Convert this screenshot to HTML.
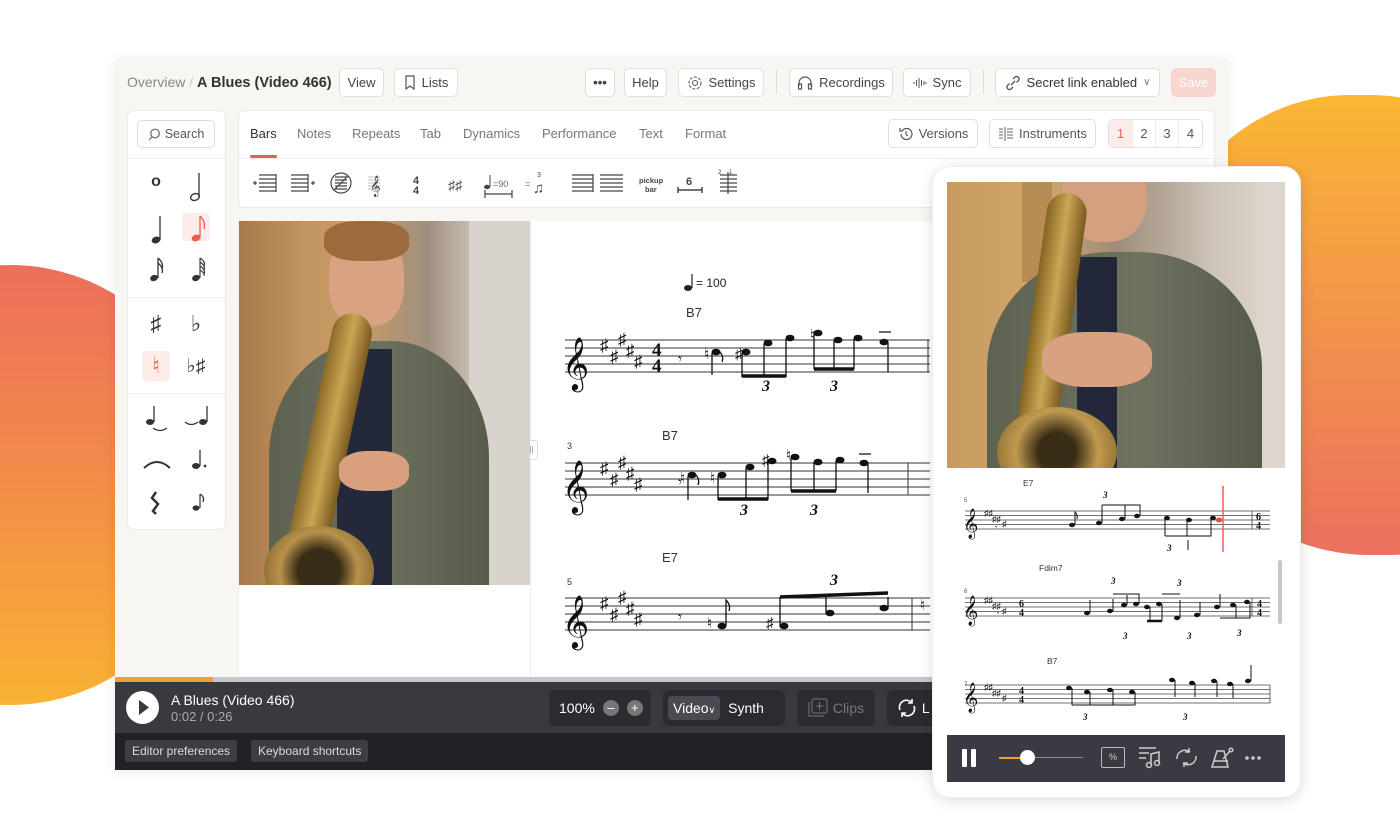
<!DOCTYPE html>
<html><head><meta charset="utf-8"><style>
*{box-sizing:border-box;margin:0;padding:0}
body{width:1400px;height:826px;overflow:hidden;background:#fff;font-family:"Liberation Sans","DejaVu Sans",sans-serif;position:relative;color:#333}
.abs{position:absolute}
.btn{position:absolute;top:68px;height:29px;background:#fff;border:1px solid #e2e0dc;border-radius:5px;font-size:13px;color:#444;display:flex;align-items:center;justify-content:center;gap:6px}
.tab{position:absolute;top:126px;font-size:13px;color:#777}
.pal{position:absolute;font-size:22px;color:#333;width:30px;text-align:center}
.dk{position:absolute;background:#2b2b31;border-radius:5px;color:#fff;font-size:14px;display:flex;align-items:center}
.fb{position:absolute;top:740px;height:22px;background:#3d3d44;border-radius:3px;color:#ddd;font-size:12px;padding:0 7px;display:flex;align-items:center}
</style></head><body>
<div class="abs" style="left:-200px;top:265px;width:420px;height:440px;border-radius:50%;background:linear-gradient(180deg,#ec6f5c 0%,#f28a4a 45%,#f9b233 100%)"></div>
<div class="abs" style="left:1150px;top:95px;width:420px;height:460px;border-radius:50% 50% 45% 55%;background:linear-gradient(180deg,#fbb733 0%,#f49a48 40%,#ec705e 100%)"></div>

<div class="abs" style="left:115px;top:58px;width:1113px;height:712px;background:#f7f6f3;box-shadow:0 2px 14px rgba(0,0,0,.08)"></div>
<div class="abs" style="left:127px;top:74px;font-size:14px;color:#888">Overview <span style="color:#ccc">/</span> <span style="color:#333;font-weight:bold;font-size:14.5px">A Blues (Video 466)</span></div>
<div class="btn" style="left:339px;width:45px">View</div>
<div class="btn" style="left:394px;width:64px"><svg width="12" height="15"><path d="M2 1h8v13l-4-3-4 3z" fill="none" stroke="#555" stroke-width="1.2"/></svg>Lists</div>
<div class="btn" style="left:585px;width:30px;font-weight:bold">•••</div>
<div class="btn" style="left:624px;width:43px">Help</div>
<div class="btn" style="left:678px;width:86px"><svg width="16" height="16"><circle cx="8" cy="8" r="2.5" fill="none" stroke="#555"/><circle cx="8" cy="8" r="6" fill="none" stroke="#555" stroke-dasharray="3 1.5"/></svg>Settings</div>
<div class="abs" style="left:776px;top:70px;width:1px;height:24px;background:#ddd"></div>
<div class="btn" style="left:789px;width:104px"><svg width="16" height="15"><path d="M2 11V8a6 6 0 0 1 12 0v3M1.5 9h3v5h-3zM11.5 9h3v5h-3z" fill="none" stroke="#555" stroke-width="1.2"/></svg>Recordings</div>
<div class="btn" style="left:903px;width:68px"><svg width="14" height="14"><path d="M1 6v2M3.5 4v6M6 2v10M8.5 4v6M11 5v4M13 6v2" stroke="#555"/></svg>Sync</div>
<div class="abs" style="left:983px;top:70px;width:1px;height:24px;background:#ddd"></div>
<div class="btn" style="left:995px;width:165px;color:#333"><svg width="16" height="16"><path d="M6 10l4-4M4.5 8.5l-2 2a2.5 2.5 0 0 0 3.5 3.5l2-2M11.5 7.5l2-2a2.5 2.5 0 0 0-3.5-3.5l-2 2" fill="none" stroke="#555" stroke-width="1.3"/></svg><span style="color:#333">Secret link enabled</span> <span style="font-size:10px;color:#777">∨</span></div>
<div class="btn" style="left:1171px;width:45px;background:#f8d5cf;border-color:#f8d5cf;color:#fff">Save</div>

<div class="abs" style="left:127px;top:110px;width:99px;height:420px;background:#fff;border:1px solid #ebe9e5;border-radius:6px"></div>
<div class="abs" style="left:137px;top:120px;width:78px;height:28px;border:1px solid #ddd;border-radius:5px;font-size:12.5px;color:#555;display:flex;align-items:center;justify-content:center;gap:5px"><svg width="12" height="13"><circle cx="7" cy="5.5" r="4.3" fill="none" stroke="#666" stroke-width="1.2"/><path d="M4 9l-3 3" stroke="#666" stroke-width="1.2"/></svg>Search</div>
<div class="abs" style="left:128px;top:158px;width:97px;height:1px;background:#eee"></div>
<div class="abs" style="left:128px;top:297px;width:97px;height:1px;background:#eee"></div>
<div class="abs" style="left:128px;top:393px;width:97px;height:1px;background:#eee"></div>
<div class="abs" style="left:182px;top:213px;width:28px;height:28px;background:#fdecea;border-radius:4px"></div>
<div class="abs" style="left:142px;top:351px;width:28px;height:30px;background:#fdecea;border-radius:4px"></div>
<div class="pal" style="left:141px;top:173px;font-size:16px;font-weight:bold">o</div>
<svg class="abs" style="left:140px;top:166px" width="80" height="125">
<path d="M59 7v24" stroke="#333" stroke-width="1.3"/><ellipse cx="55" cy="31" rx="4.5" ry="3.3" fill="none" stroke="#333" stroke-width="1.4" transform="rotate(-20 55 31)"/>
<path d="M20 50v24" stroke="#333" stroke-width="1.3"/><ellipse cx="16" cy="74" rx="4.5" ry="3.3" fill="#333" transform="rotate(-20 16 74)"/>
<path d="M60 50v22M60 50q6 6 4 13" stroke="#e8604a" stroke-width="1.3" fill="none"/><ellipse cx="56" cy="72" rx="4.5" ry="3.3" fill="#e8604a" transform="rotate(-20 56 72)"/>
<path d="M18 92v20M18 92q6 5 4 11M18 97q6 5 4 10" stroke="#333" stroke-width="1.3" fill="none"/><ellipse cx="14" cy="112" rx="4" ry="3" fill="#333" transform="rotate(-20 14 112)"/>
<path d="M60 92v20M60 92q6 4 4 8M60 96q6 4 4 8M60 100q6 4 4 8M60 104q5 3 4 6" stroke="#333" stroke-width="1.1" fill="none"/><ellipse cx="56" cy="112" rx="4" ry="3" fill="#333" transform="rotate(-20 56 112)"/>
</svg>
<div class="pal" style="left:141px;top:311px;font-size:22px">♯</div>
<div class="pal" style="left:181px;top:311px;font-size:22px">♭</div>
<div class="pal" style="left:141px;top:353px;font-size:22px;color:#e8604a">♮</div>
<div class="pal" style="left:181px;top:355px;font-size:19px">♭♯</div>
<svg class="abs" style="left:140px;top:400px" width="80" height="125">
<path d="M14 6v16" stroke="#333" stroke-width="1.3"/><ellipse cx="10" cy="22" rx="4" ry="3" fill="#333"/><path d="M13 28q7 5 14 0" stroke="#333" fill="none" stroke-width="1.3"/>
<path d="M67 6v16" stroke="#333" stroke-width="1.3"/><ellipse cx="63" cy="22" rx="4" ry="3" fill="#333"/><path d="M45 22q6 5 13 0" stroke="#333" fill="none" stroke-width="1.3"/>
<path d="M4 68q13-12 26 0" stroke="#333" fill="none" stroke-width="2"/>
<path d="M60 50v16" stroke="#333" stroke-width="1.3"/><ellipse cx="56" cy="66" rx="4" ry="3" fill="#333"/><circle cx="65" cy="66" r="1.4" fill="#333"/>
<path d="M16 92l-4 6 6 6-5 7 3 3" stroke="#333" stroke-width="2.5" fill="none"/>
<path d="M60 94v14M60 94q5 3 3 8" stroke="#333" fill="none" stroke-width="1.2"/><ellipse cx="56" cy="108" rx="3.5" ry="2.6" fill="#333"/>
</svg>

<div class="abs" style="left:238px;top:110px;width:977px;height:98px;background:#fff;border:1px solid #ebe9e5;border-radius:6px"></div>
<div class="abs" style="left:239px;top:158px;width:975px;height:1px;background:#eee"></div>
<div class="tab" style="left:250px;color:#333">Bars</div>
<div class="abs" style="left:250px;top:155px;width:27px;height:3px;background:#e8604a;border-radius:2px"></div>
<div class="tab" style="left:297px">Notes</div>
<div class="tab" style="left:352px">Repeats</div>
<div class="tab" style="left:420px">Tab</div>
<div class="tab" style="left:463px">Dynamics</div>
<div class="tab" style="left:542px">Performance</div>
<div class="tab" style="left:639px">Text</div>
<div class="tab" style="left:685px">Format</div>
<div class="abs" style="left:888px;top:119px;width:90px;height:29px;border:1px solid #e2e0dc;border-radius:5px;font-size:13px;color:#555;display:flex;align-items:center;justify-content:center;gap:5px"><svg width="16" height="16"><path d="M3 8a5.5 5.5 0 1 0 1.5-3.8M2 2v3h3M8 5v3.5l2 1.5" fill="none" stroke="#555" stroke-width="1.2"/></svg>Versions</div>
<div class="abs" style="left:989px;top:119px;width:107px;height:29px;border:1px solid #e2e0dc;border-radius:5px;font-size:13px;color:#555;display:flex;align-items:center;justify-content:center;gap:5px"><svg width="16" height="16"><path d="M1 3h4M1 6h4M1 9h4M1 12h4M9 3h6M9 6h6M9 9h6M9 12h6" stroke="#666"/><path d="M7 1v14" stroke="#666"/></svg>Instruments</div>
<div class="abs" style="left:1108px;top:119px;width:95px;height:29px;border:1px solid #e2e0dc;border-radius:5px;display:flex;font-size:13px;color:#555;overflow:hidden">
<div style="width:24px;background:#fdecea;color:#e8604a;display:flex;align-items:center;justify-content:center;border-right:1px solid #eee">1</div>
<div style="width:23px;display:flex;align-items:center;justify-content:center;border-right:1px solid #eee">2</div>
<div style="width:23px;display:flex;align-items:center;justify-content:center;border-right:1px solid #eee">3</div>
<div style="width:23px;display:flex;align-items:center;justify-content:center">4</div></div>
<svg class="abs" style="left:250px;top:168px" width="500" height="30">
<g stroke="#444" stroke-width="1.2" fill="none">
<path d="M9 7h17M9 11h17M9 15h17M9 19h17M9 23h17M26 6v18M3 15h4M5 13v4"/>
<path d="M41 7h17M41 11h17M41 15h17M41 19h17M41 23h17M58 6v18M61 15h4M63 13v4"/>
<circle cx="91" cy="15" r="10"/><path d="M85 9h12M85 12h12M85 15h12M85 18h12M85 21h12M84 22l14-14"/>
<path d="M118 9h12M118 12h12M118 15h12M118 18h12M118 21h12" stroke="#ccc"/>
<path d="M235 26h27M235 22v8M262 22v8"/>
<path d="M322 7h21M322 11h21M322 15h21M322 19h21M322 23h21M343 6v18"/>
<path d="M350 7h23M350 11h23M350 15h23M350 19h23M350 23h23"/>
<path d="M470 7h17M470 11h17M470 15h17M470 19h17M470 23h17M478 4v22"/>
</g>
<text x="120" y="24" font-size="18" fill="#444">𝄞</text>
<text x="163" y="16" font-size="11" font-weight="bold" fill="#444">4</text><text x="163" y="26" font-size="11" font-weight="bold" fill="#444">4</text>
<text x="198" y="22" font-size="14" fill="#444">♯♯</text>
<ellipse cx="237" cy="19" rx="3" ry="2.2" fill="#444"/><path d="M240 19V7" stroke="#444"/><text x="243" y="19" font-size="9" fill="#666">=90</text>
<text x="275" y="19" font-size="9" fill="#666">=</text><text x="283" y="25" font-size="15" fill="#444">♫</text><text x="287" y="9" font-size="7" fill="#444">3</text>
<text x="389" y="15" font-size="7.5" font-weight="bold" fill="#444">pickup</text><text x="395" y="24" font-size="7.5" font-weight="bold" fill="#444">bar</text>
<text x="436" y="17" font-size="11" font-weight="bold" fill="#444">6</text>
<path d="M428 22h24M428 19v6M452 19v6" stroke="#444" stroke-width="1.5"/>
<text x="468" y="6" font-size="6" fill="#444">2</text><text x="479" y="6" font-size="6" fill="#444">1</text>
</svg>

<div class="abs" style="left:238px;top:221px;width:700px;height:460px;background:#fff;border-left:1px solid #eee"></div>
<div class="abs" style="left:530px;top:221px;width:1px;height:460px;background:#eee"></div>
<div class="abs" style="left:523px;top:440px;width:15px;height:20px;background:#fff;border:1px solid #ddd;border-radius:3px;font-size:8px;color:#888;text-align:center;line-height:18px">|||</div>
<div class="abs" style="left:239px;top:221px;width:291px;height:364px;overflow:hidden;background:linear-gradient(90deg,#b98c5c 0%,#c99b66 40%,#9f8f7e 65%,#c8c0b4 80%,#d7d0c6 100%)">
<div class="abs" style="left:230px;top:0;width:61px;height:364px;background:#d8d4cc"></div>
<div class="abs" style="left:0;top:0;width:60px;height:364px;background:linear-gradient(90deg,#a8794a,#bf915e)"></div>
<div class="abs" style="left:90px;top:10px;width:75px;height:95px;border-radius:45% 45% 40% 40%;background:#d9a383"></div>
<div class="abs" style="left:85px;top:0;width:85px;height:40px;border-radius:40%;background:#9c6b3d"></div>
<div class="abs" style="left:30px;top:120px;width:220px;height:260px;border-radius:45% 45% 0 0;background:linear-gradient(90deg,#5d6150,#6c705e 50%,#585b4c)"></div>
<div class="abs" style="left:98px;top:128px;width:55px;height:240px;background:#23283a"></div>
<div class="abs" style="left:70px;top:90px;width:40px;height:260px;transform:rotate(12deg);background:linear-gradient(90deg,#8a6a2a,#c9a552,#7a5a20);border-radius:20px"></div>
<div class="abs" style="left:25px;top:305px;width:110px;height:90px;border-radius:50%;background:radial-gradient(circle,#3a2d15 30%,#b8924a 55%,#6d5220)"></div>
<div class="abs" style="left:100px;top:230px;width:70px;height:40px;border-radius:40%;background:#d9a07e"></div>
</div>
<svg class="abs" style="left:540px;top:265px" width="400" height="420">
<ellipse cx="148" cy="23" rx="4" ry="3" fill="#222"/><path d="M152 23V9" stroke="#222" stroke-width="1.2"/>
<text x="156" y="22" font-size="12" fill="#222">= 100</text>
<text x="146" y="52" font-size="13" fill="#333">B7</text>
<text x="122" y="175" font-size="13" fill="#333">B7</text>
<text x="122" y="297" font-size="13" fill="#333">E7</text>
<text x="27" y="184" font-size="9" fill="#333">3</text>
<text x="27" y="320" font-size="9" fill="#333">5</text>
<g stroke="#333" stroke-width="1">
<path d="M25 75h365M25 83h365M25 91h365M25 99h365M25 107h365"/>
<path d="M25 198h365M25 206h365M25 214h365M25 222h365M25 230h365"/>
<path d="M25 333h365M25 341h365M25 349h365M25 357h365M25 365h365"/>
<path d="M388 75v32M368 198v32M372 333v32"/>
</g>
<g font-size="46" fill="#111"><text x="22" y="114">𝄞</text><text x="22" y="237">𝄞</text><text x="22" y="372">𝄞</text></g>
<g font-size="17" fill="#111">
<text x="60" y="86">♯</text><text x="70" y="97">♯</text><text x="78" y="80">♯</text><text x="86" y="91">♯</text><text x="94" y="102">♯</text>
<text x="60" y="209">♯</text><text x="70" y="220">♯</text><text x="78" y="203">♯</text><text x="86" y="214">♯</text><text x="94" y="225">♯</text>
<text x="60" y="344">♯</text><text x="70" y="355">♯</text><text x="78" y="338">♯</text><text x="86" y="349">♯</text><text x="94" y="360">♯</text>
</g>
<g font-size="19" font-weight="bold" fill="#111" font-family="Liberation Serif"><text x="112" y="91">4</text><text x="112" y="107">4</text></g>
<g fill="#111" font-size="16" font-family="Liberation Serif" font-style="italic" font-weight="bold">
<text x="222" y="126">3</text><text x="290" y="126">3</text><text x="200" y="250">3</text><text x="270" y="250">3</text><text x="290" y="320">3</text>
</g>
<g fill="#111" font-size="15"><text x="138" y="99">𝄾</text><text x="138" y="222">𝄾</text><text x="138" y="357">𝄾</text>
<text x="164" y="94">♮</text><text x="195" y="94">♯</text><text x="270" y="75">♮</text>
<text x="140" y="218">♮</text><text x="170" y="218">♮</text><text x="222" y="200">♯</text><text x="246" y="195">♮</text>
<text x="167" y="363">♮</text><text x="226" y="363">♯</text><text x="380" y="345">♮</text></g>
<g fill="#111">
<ellipse cx="176" cy="87" rx="4.5" ry="3.3"/><ellipse cx="206" cy="87" rx="4.5" ry="3.3"/><ellipse cx="228" cy="78" rx="4.5" ry="3.3"/><ellipse cx="250" cy="73" rx="4.5" ry="3.3"/><ellipse cx="278" cy="68" rx="4.5" ry="3.3"/><ellipse cx="298" cy="75" rx="4.5" ry="3.3"/><ellipse cx="318" cy="73" rx="4.5" ry="3.3"/><ellipse cx="344" cy="77" rx="4.5" ry="3.3"/>
<ellipse cx="152" cy="210" rx="4.5" ry="3.3"/><ellipse cx="182" cy="210" rx="4.5" ry="3.3"/><ellipse cx="210" cy="202" rx="4.5" ry="3.3"/><ellipse cx="232" cy="196" rx="4.5" ry="3.3"/><ellipse cx="255" cy="192" rx="4.5" ry="3.3"/><ellipse cx="278" cy="197" rx="4.5" ry="3.3"/><ellipse cx="300" cy="195" rx="4.5" ry="3.3"/><ellipse cx="324" cy="198" rx="4.5" ry="3.3"/>
<ellipse cx="182" cy="361" rx="4.5" ry="3.3"/><ellipse cx="244" cy="361" rx="4.5" ry="3.3"/><ellipse cx="290" cy="348" rx="4.5" ry="3.3"/><ellipse cx="344" cy="343" rx="4.5" ry="3.3"/>
</g>
<g stroke="#111" stroke-width="1.3" fill="none">
<path d="M172 88v22M180 87q4 5 2 10M202 88v24M224 79v33M246 74v38M274 69v35M294 76v28M314 74v30M348 77v30M339 67h12"/>
<path d="M148 211v24M156 210q4 5 2 10M178 211v24M206 203v32M228 197v38M251 193v33M274 198v28M296 196v30M328 198v30M319 189h12"/>
<path d="M186 361v-26q5 5 3 11M240 362v-30M286 349v-17M348 344v-12"/>
</g>
<g stroke="#111" stroke-width="3.5"><path d="M202 111l44 0M274 104h40M178 234l50 0M251 226l45 0M240 332l108 -4"/></g>
</svg>

<div class="abs" style="left:115px;top:677px;width:820px;height:5px;background:#c8c8cc"></div>
<div class="abs" style="left:115px;top:677px;width:98px;height:5px;background:#f0a030"></div>
<div class="abs" style="left:115px;top:682px;width:820px;height:51px;background:#393940"></div>
<div class="abs" style="left:115px;top:733px;width:820px;height:37px;background:#222226"></div>
<div class="abs" style="left:126px;top:691px;width:33px;height:33px;border-radius:50%;background:#fff"></div>
<svg class="abs" style="left:126px;top:691px" width="33" height="33"><path d="M13 9l10 7.5-10 7.5z" fill="#393940"/></svg>
<div class="abs" style="left:171px;top:692px;color:#fff;font-size:14px">A Blues (Video 466)</div>
<div class="abs" style="left:171px;top:709px;color:#aaa;font-size:13px">0:02 / 0:26</div>
<div class="dk" style="left:549px;top:690px;width:102px;height:36px;padding-left:10px">100%<span style="display:inline-block;width:16px;height:16px;border-radius:50%;background:#777;margin-left:8px;text-align:center;line-height:15px;font-size:13px">–</span><span style="display:inline-block;width:16px;height:16px;border-radius:50%;background:#777;margin-left:8px;text-align:center;line-height:16px;font-size:13px">+</span></div>
<div class="dk" style="left:663px;top:690px;width:122px;height:36px;padding-left:5px"><span style="background:#4a4a52;border-radius:4px;padding:4px 5px">Video<span style="font-size:9px">∨</span></span><span style="margin-left:8px">Synth</span></div>
<div class="dk" style="left:797px;top:690px;width:78px;height:36px;padding-left:10px;color:#777"><svg width="22" height="20"><rect x="5" y="1" width="15" height="14" rx="2" fill="none" stroke="#777"/><path d="M2 4v14h15M12.5 4v8M8.5 8h8" fill="none" stroke="#777"/></svg>&nbsp;Clips</div>
<div class="dk" style="left:887px;top:690px;width:48px;height:36px;padding-left:9px;border-radius:5px 0 0 5px"><svg width="22" height="22"><path d="M4 13a7 7 0 0 1 12-7M18 9a7 7 0 0 1-12 7M16 2v4h-4M6 20v-4h4" fill="none" stroke="#fff" stroke-width="1.6"/></svg>&nbsp;L</div>
<div class="fb" style="left:125px">Editor preferences</div>
<div class="fb" style="left:251px">Keyboard shortcuts</div>

<div class="abs" style="left:932px;top:166px;width:369px;height:632px;background:#fff;border-radius:18px;box-shadow:0 3px 14px rgba(0,0,0,.13);border:1px solid #eee"></div>
<div class="abs" style="left:947px;top:182px;width:338px;height:286px;overflow:hidden;background:linear-gradient(90deg,#c79a5f 0%,#d3a76c 28%,#9e8c7a 50%,#cfc6ba 80%,#e0d9cf 100%)">
<div class="abs" style="left:310px;top:0;width:28px;height:286px;background:#dcd6ce"></div>
<div class="abs" style="left:75px;top:0;width:30px;height:100px;background:#b88c55"></div>
<div class="abs" style="left:115px;top:-30px;width:85px;height:90px;border-radius:45%;background:#d4a080"></div>
<div class="abs" style="left:40px;top:70px;width:275px;height:260px;border-radius:45% 45% 0 0;background:linear-gradient(90deg,#5e6251,#6e725f 55%,#565a4b)"></div>
<div class="abs" style="left:130px;top:75px;width:40px;height:220px;background:#22283a"></div>
<div class="abs" style="left:85px;top:10px;width:40px;height:250px;transform:rotate(8deg);background:linear-gradient(90deg,#856420,#caa656,#7a5a20);border-radius:20px"></div>
<div class="abs" style="left:50px;top:225px;width:120px;height:90px;border-radius:50%;background:radial-gradient(circle,#3a2d15 25%,#c09a50 55%,#7a5c24)"></div>
<div class="abs" style="left:95px;top:150px;width:110px;height:55px;border-radius:40%;background:#d8a17f"></div>
</div>
<svg class="abs" style="left:947px;top:468px" width="338" height="268">
<text x="76" y="18" font-size="8.5" fill="#333">E7</text>
<text x="92" y="103" font-size="8.5" fill="#333">Fdim7</text>
<text x="100" y="196" font-size="8.5" fill="#333">B7</text>
<text x="17" y="34" font-size="6" fill="#555">5</text><text x="17" y="125" font-size="6" fill="#555">6</text><text x="17" y="218" font-size="6" fill="#555">7</text>
<g stroke="#444" stroke-width=".8">
<path d="M18 43h305M18 47.5h305M18 52h305M18 56.5h305M18 61h305"/>
<path d="M18 130h305M18 134.5h305M18 139h305M18 143.5h305M18 148h305"/>
<path d="M18 217h305M18 221.5h305M18 226h305M18 230.5h305M18 235h305"/>
<path d="M305 43v18M323 217v18M305 130v18"/>
</g>
<g font-size="26" fill="#111"><text x="16" y="64">𝄞</text><text x="16" y="151">𝄞</text><text x="16" y="238">𝄞</text></g>
<g font-size="9" fill="#111"><text x="37" y="48">♯♯</text><text x="45" y="54">♯♯</text><text x="55" y="59">♯</text>
<text x="37" y="135">♯♯</text><text x="45" y="141">♯♯</text><text x="55" y="146">♯</text>
<text x="37" y="222">♯♯</text><text x="45" y="228">♯♯</text><text x="55" y="233">♯</text></g>
<g font-weight="bold" font-size="10" fill="#111" font-family="Liberation Serif"><text x="309" y="52">6</text><text x="309" y="61">4</text><text x="72" y="139">6</text><text x="72" y="148">4</text><text x="310" y="139">4</text><text x="310" y="148">4</text><text x="72" y="226">4</text><text x="72" y="235">4</text>
<g font-style="italic" font-size="9"><text x="156" y="30">3</text><text x="220" y="83">3</text><text x="164" y="116">3</text><text x="230" y="118">3</text><text x="176" y="171">3</text><text x="240" y="171">3</text><text x="290" y="168">3</text><text x="136" y="252">3</text><text x="236" y="252">3</text></g></g>
<g fill="#111">
<ellipse cx="125" cy="57" rx="3" ry="2.2"/><ellipse cx="152" cy="55" rx="3" ry="2.2"/><ellipse cx="175" cy="51" rx="3" ry="2.2"/><ellipse cx="190" cy="48" rx="3" ry="2.2"/><ellipse cx="220" cy="50" rx="3" ry="2.2"/><ellipse cx="242" cy="52" rx="3" ry="2.2"/><ellipse cx="266" cy="50" rx="3" ry="2.2"/>
<ellipse cx="140" cy="145" rx="3" ry="2.2"/><ellipse cx="163" cy="143" rx="3" ry="2.2"/><ellipse cx="177" cy="137" rx="3" ry="2.2"/><ellipse cx="189" cy="136" rx="3" ry="2.2"/><ellipse cx="200" cy="139" rx="3" ry="2.2"/><ellipse cx="212" cy="136" rx="3" ry="2.2"/><ellipse cx="230" cy="150" rx="3" ry="2.2"/><ellipse cx="250" cy="147" rx="3" ry="2.2"/><ellipse cx="270" cy="139" rx="3" ry="2.2"/><ellipse cx="286" cy="137" rx="3" ry="2.2"/><ellipse cx="300" cy="134" rx="3" ry="2.2"/>
<ellipse cx="122" cy="220" rx="3" ry="2.2"/><ellipse cx="140" cy="224" rx="3" ry="2.2"/><ellipse cx="163" cy="222" rx="3" ry="2.2"/><ellipse cx="185" cy="224" rx="3" ry="2.2"/><ellipse cx="225" cy="212" rx="3" ry="2.2"/><ellipse cx="245" cy="215" rx="3" ry="2.2"/><ellipse cx="267" cy="213" rx="3" ry="2.2"/><ellipse cx="283" cy="216" rx="3" ry="2.2"/><ellipse cx="301" cy="213" rx="3" ry="2.2"/>
<text x="48" y="62" font-size="8">𝄾</text><text x="50" y="148" font-size="8">𝄾</text>
</g>
<g stroke="#111" stroke-width="1" fill="none">
<path d="M128 57v-13q3 3 2 7M155 55v-18M178 51v-14M193 48v-11h-38M218 50v18M240 52v16M264 50v18h-46M241 82v-10"/>
<path d="M143 145v-13M166 143v-12M180 137v-10M192 136v-10h-26M203 139v14M215 136v17M233 150v-18M253 147v-13M273 139v-13M289 137v13M303 134v16h-30M215 126h18"/>
<path d="M125 220v17M143 224v13M166 222v15M188 224v13h-63M228 212v17M248 215v14M270 213v16M286 216v14M304 213v-16"/>
<path d="M200 153h15" stroke-width="2.5"/>
</g>
<ellipse cx="272" cy="52" rx="3.2" ry="2.4" fill="#e0503a"/>
<path d="M276 18v66" stroke="#e8604a" stroke-width="1.5"/>
<rect x="331" y="92" width="4" height="64" rx="2" fill="#c6c6c6"/>
</svg>
<div class="abs" style="left:947px;top:735px;width:338px;height:47px;background:#3a3a42"></div>
<div class="abs" style="left:962px;top:749px;width:5px;height:18px;background:#fff;border-radius:1px"></div>
<div class="abs" style="left:971px;top:749px;width:5px;height:18px;background:#fff;border-radius:1px"></div>
<div class="abs" style="left:999px;top:757px;width:28px;height:2px;background:#f0a030"></div>
<div class="abs" style="left:1027px;top:757px;width:56px;height:1px;background:#888"></div>
<div class="abs" style="left:1020px;top:750px;width:15px;height:15px;border-radius:50%;background:#fff"></div>
<div class="abs" style="left:1101px;top:747px;width:24px;height:21px;border:1.5px solid #bbb;border-radius:2px;color:#ccc;font-size:9px;text-align:center;line-height:18px">%</div>
<svg class="abs" style="left:1137px;top:745px" width="130" height="26">
<g stroke="#ccc" stroke-width="1.5" fill="none">
<path d="M2 3h17M2 8h10M2 13h7M14 20V9l8-2v11"/><circle cx="12" cy="20" r="2.5"/><circle cx="20" cy="18" r="2.5"/>
<path d="M40 14a8 8 0 0 1 13-7M59 11a8 8 0 0 1-13 7M52 3v4h-4M47 22v-4h4"/>
<path d="M75 22l5-16h7l4 16zM77 16h14M86 14l7-8"/><circle cx="94" cy="5" r="1.8"/>
</g>
<g fill="#ccc"><circle cx="110" cy="13" r="1.8"/><circle cx="116" cy="13" r="1.8"/><circle cx="122" cy="13" r="1.8"/></g>
</svg>
</body></html>
